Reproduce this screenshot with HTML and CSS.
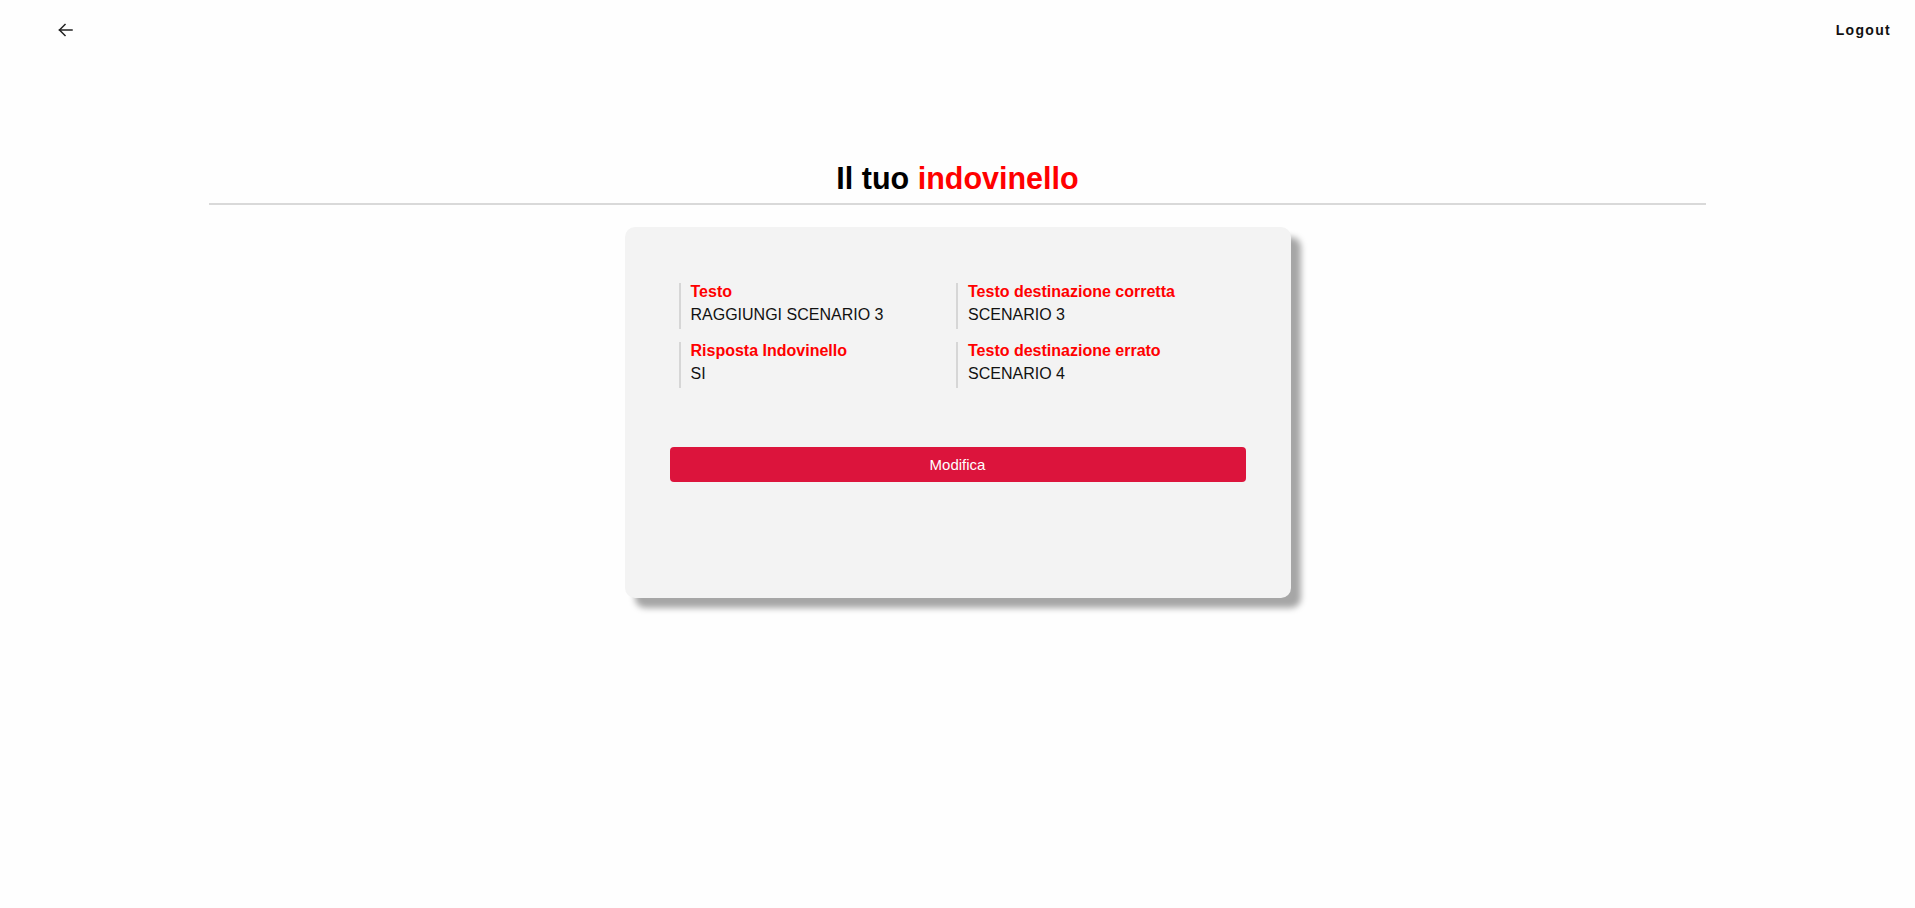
FILE: index.html
```html
<!DOCTYPE html>
<html lang="it">
<head>
<meta charset="utf-8">
<title>Il tuo indovinello</title>
<link rel="stylesheet" href="styles.css">
</head>
<body>
<header class="topbar">
  <button class="back-btn" type="button" aria-label="Indietro">
    <svg width="24" height="24" viewBox="0 0 24 24" fill="none" stroke="#222" stroke-width="1.5" stroke-linecap="square">
      <path d="M19 12H6.5"/>
      <path d="M12 6.5L6.5 12L12 17.5" stroke-linejoin="miter"/>
    </svg>
  </button>
  <a class="logout" href="#">Logout</a>
</header>
<main class="page">
  <h1 class="title">Il tuo <span class="accent">indovinello</span></h1>
  <hr class="divider">
  <section class="card">
    <div class="fields">
      <div class="field">
        <div class="field-label">Testo</div>
        <div class="field-value">RAGGIUNGI SCENARIO 3</div>
      </div>
      <div class="field">
        <div class="field-label">Testo destinazione corretta</div>
        <div class="field-value">SCENARIO 3</div>
      </div>
      <div class="field">
        <div class="field-label">Risposta Indovinello</div>
        <div class="field-value">SI</div>
      </div>
      <div class="field">
        <div class="field-label">Testo destinazione errato</div>
        <div class="field-value">SCENARIO 4</div>
      </div>
    </div>
    <button class="edit-btn" type="button">Modifica</button>
  </section>
</main>
</body>
</html>
```
FILE: styles.css
```css
* {
  box-sizing: border-box;
}

html, body {
  margin: 0;
  padding: 0;
  background: #fefefe;
}

body {
  min-height: 100vh;
  font-family: "Liberation Sans", Arial, sans-serif;
  color: #111;
}

.topbar {
  height: 60px;
  display: flex;
  align-items: center;
  justify-content: space-between;
  padding: 0 24px 0 53px;
}

.back-btn {
  width: 24px;
  height: 24px;
  padding: 0;
  border: 0;
  background: transparent;
  display: flex;
  align-items: center;
  justify-content: center;
  cursor: pointer;
}

.logout {
  font-size: 14px;
  font-weight: bold;
  letter-spacing: 1.3px;
  color: #111;
  text-decoration: none;
}

.page {
  display: flex;
  flex-direction: column;
  align-items: center;
  padding-bottom: 60px;
}

.title {
  margin: 101px 0 8px;
  font-size: 30.5px;
  font-weight: bold;
  line-height: 34px;
  color: #000;
  text-align: center;
}

.accent {
  color: #ff0000;
}

.divider {
  width: 1497px;
  height: 2px;
  margin: 0 0 22px;
  border: 0;
  background: #d9d9d9;
}

.card {
  width: 666px;
  min-height: 371px;
  padding: 56px 45px 0;
  background: #f3f3f3;
  border-radius: 10px;
  box-shadow: 10px 10px 6px #a6a6a6;
}

.fields {
  display: grid;
  grid-template-columns: 1fr 1fr;
  row-gap: 13px;
  padding: 0 12px 0 9px;
}

.field {
  border-left: 2px solid #d6d6d6;
  padding: 0 0 5px 10px;
}

.field-label {
  font-size: 16px;
  font-weight: bold;
  color: #ff0000;
  margin-bottom: 5px;
}

.field-value {
  font-size: 16px;
  color: #111;
}

.edit-btn {
  display: block;
  width: 100%;
  height: 35px;
  margin-top: 58.5px;
  border: 0;
  border-radius: 4px;
  background: #dc143c;
  color: #fff;
  font-family: "Liberation Sans", Arial, sans-serif;
  font-size: 15px;
  cursor: pointer;
}
```
